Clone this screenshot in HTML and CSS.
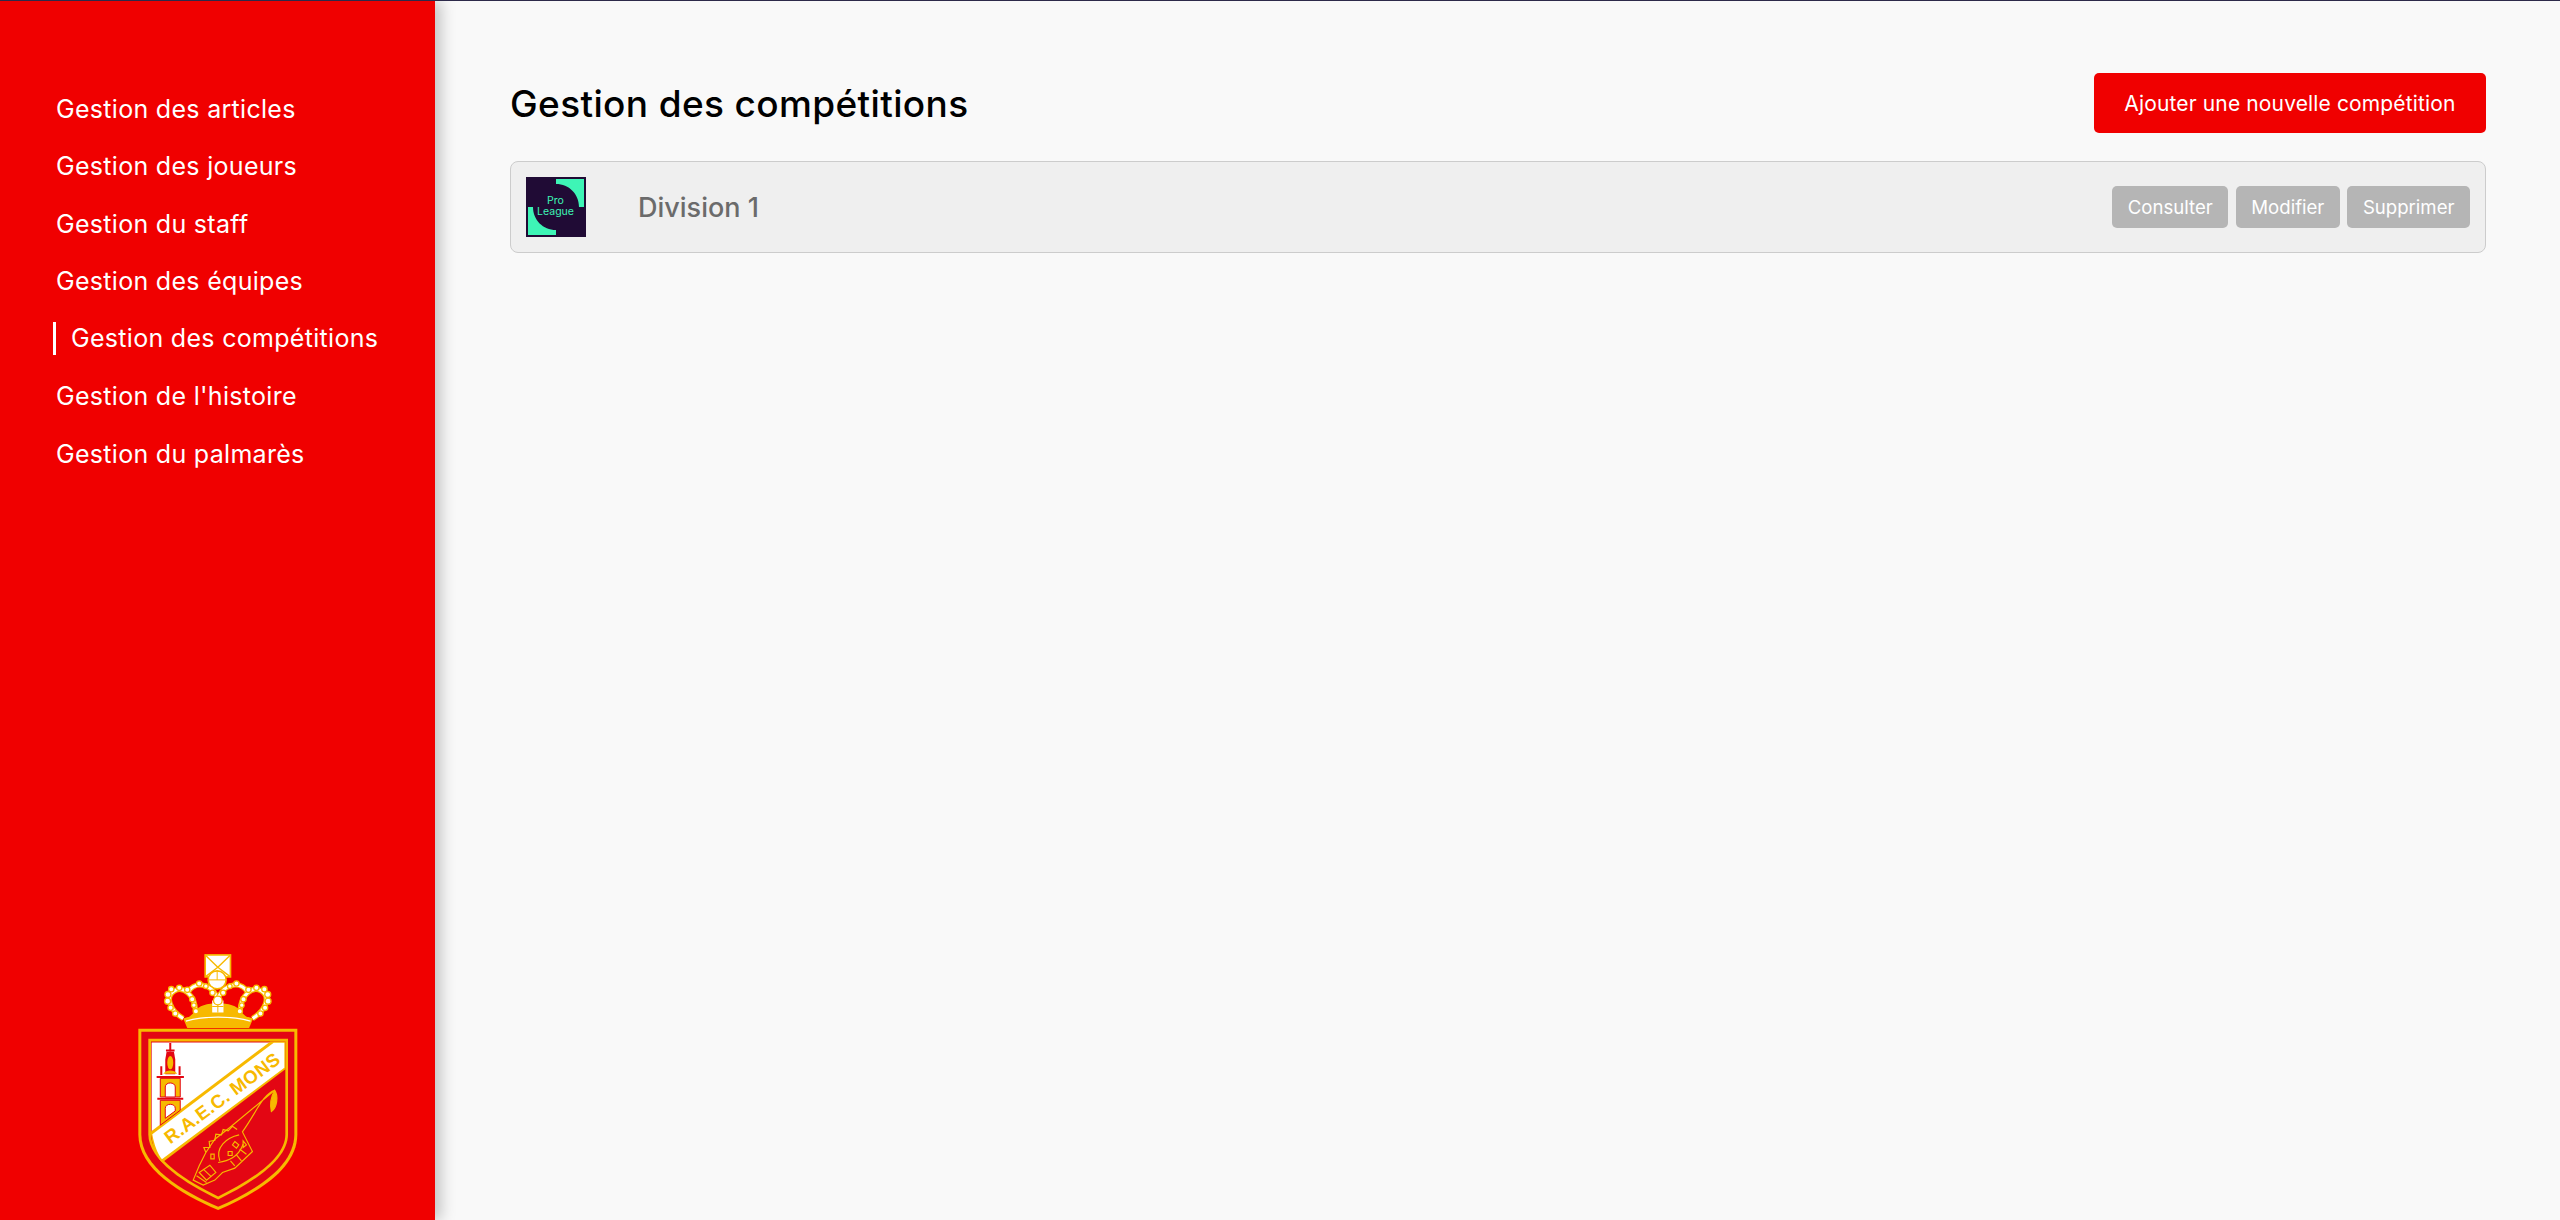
FILE: index.html
```html
<!DOCTYPE html>
<html lang="fr">
<head>
    <meta charset="UTF-8">
    <meta name="viewport" content="width=device-width, initial-scale=1.0">
    <title>Gestion des compétitions</title>
    <link rel="stylesheet" href="styles.css">
</head>
<body>
    <!-- Sidebar -->
    <aside class="sidebar">
        <ul class="nav">
            <li><a href="#">Gestion des articles</a></li>
            <li><a href="#">Gestion des joueurs</a></li>
            <li><a href="#">Gestion du staff</a></li>
            <li><a href="#">Gestion des équipes</a></li>
            <li><a href="#" class="active">Gestion des compétitions</a></li>
            <li><a href="#">Gestion de l'histoire</a></li>
            <li><a href="#">Gestion du palmarès</a></li>
        </ul>

        <!-- Club crest -->
        <svg class="crest" viewBox="114 66 484 774" role="img" aria-label="R.A.E.C. Mons">
            <!-- cross and orb -->
            <rect x="316" y="71" width="76" height="66" fill="#fff" stroke="#f7b900" stroke-width="5"/>
            <path d="M316 71 L354 108 L392 71 M354 108 L316 137 M354 108 L392 137" fill="none" stroke="#f7b900" stroke-width="4"/>
            <circle cx="352" cy="146" r="27" fill="#fff" stroke="#f7b900" stroke-width="5"/>
            <path d="M325 146 H379 M352 119 V146" stroke="#f7b900" stroke-width="3"/>
            <!-- crown: one half, mirrored -->
            <path d="M287 240 C300 208 408 208 421 240 L450 266 H258 Z" fill="#f7b900"/>
            <rect x="337" y="208" width="34" height="36" fill="#fff"/>
            <path d="M337 226 H371 M354 208 V244" stroke="#f7b900" stroke-width="3"/>
            <g id="crown-half" fill="none">
                <path d="M250 262 C212 240 192 195 225 178 C250 165 285 190 287 240" stroke="#f7b900" stroke-width="16"/>
                <path d="M250 262 C212 240 192 195 225 178 C250 165 285 190 287 240" stroke="#fff" stroke-width="9"/>
                <path d="M265 182 C285 150 330 155 352 197" stroke="#f7b900" stroke-width="16"/>
                <path d="M265 182 C285 150 330 155 352 197" stroke="#fff" stroke-width="9"/>
                <g fill="#fff" stroke="#f7b900" stroke-width="4">
                    <circle cx="204" cy="190" r="9"/><circle cx="203" cy="210" r="9"/><circle cx="212" cy="230" r="8"/><circle cx="226" cy="247" r="8"/>
                    <circle cx="214" cy="174" r="8"/><circle cx="238" cy="170" r="8"/><circle cx="277" cy="204" r="8"/><circle cx="282" cy="222" r="7"/>
                    <circle cx="288" cy="240" r="8"/><circle cx="262" cy="176" r="8"/><circle cx="298" cy="157" r="8"/><circle cx="318" cy="165" r="7"/>
                    <circle cx="338" cy="185" r="8"/>
                </g>
            </g>
            <use href="#crown-half" transform="translate(708 0) scale(-1 1)"/>
            <circle cx="354" cy="208" r="13" fill="#fff" stroke="#f7b900" stroke-width="4"/>
            <path d="M250 262 C300 245 410 245 460 262 L448 291 H262 Z" fill="#f7b900"/>
            <path d="M258 270 C310 254 400 254 452 270" fill="none" stroke="#fff" stroke-width="4"/>
            <!-- shield -->
            <path d="M115 293 H593 V610 C593 715 470 788 355 838 C240 788 115 715 115 610 Z" fill="#f7b900"/>
            <path d="M124 302 H584 V610 C584 708 465 780 355 828 C245 780 124 708 124 610 Z" fill="#e30613"/>
            <path d="M145 323 H565 V610 C565 690 450 760 355 806 C260 760 145 690 145 610 Z" fill="#f7b900"/>
            <path d="M153 331 H557 V610 C557 685 447 752 355 797 C263 752 153 685 153 610 Z" fill="#e30613"/>
            <path d="M155 334 H520 L155 604 Z" fill="#fff"/>
            <!-- diagonal band -->
            <path d="M153 602 L512 331 H557 V415 L187 695 C170 680 158 650 153 610 Z" fill="#f7b900"/>
            <path d="M157 610 L522 335 H554 V410 L186 685 C172 668 162 640 157 610 Z" fill="#fff"/>
            <text class="crest-text" x="0" y="0" transform="translate(211 641) rotate(-36.5)">R.A.E.C. MONS</text>
            <!-- belfry -->
            <path d="M181 442 H241 V498 H181 Z M181 508 H241 V538 L181 583 Z" fill="#f7b900" stroke="#e30613" stroke-width="3"/>
            <path d="M196 430 V385 L200 362 H222 L226 385 V430 Z" fill="#e30613"/>
            <ellipse cx="211" cy="395" rx="9" ry="20" fill="#f7b900"/>
            <path d="M190 428 C200 415 222 415 232 428 Z" fill="#f7b900"/>
            <path d="M211 336 V362 M198 358 H224 M170 438 H252 M172 503 H250 M184 406 V432 M239 406 V432" stroke="#e30613" stroke-width="6"/>
            <path d="M196 498 V468 C196 452 226 452 226 468 V498 Z M196 562 V532 C196 516 226 516 226 532 V540 Z" fill="#fff" stroke="#e30613" stroke-width="3"/>
            <!-- dragon -->
            <g fill="none" stroke="#f7b900" stroke-width="3.5">
                <path d="M525 478 C500 485 480 520 465 545 C450 570 437 590 428 603 L458 662 L405 712 L368 725 L345 748 L310 763 L280 748 L298 705 L318 665 L345 625 L390 590 Z" fill="#e30613"/>
                <path d="M525 478 C537 495 532 530 515 542 C510 520 515 495 525 478 Z" fill="#f7b900"/>
                <path d="M318 665 L312 650 L330 650 L328 632 L345 628 L348 610 L365 612 L370 596 L385 600 L398 586 L412 596"/>
                <path d="M360 690 C345 650 380 620 418 612 M355 695 C385 690 415 680 430 640"/>
                <path d="M333 670 H343 V684 H333 Z M405 632 L417 642 L410 652 L398 642 Z M385 662 H397 V674 H385 Z M430 630 L440 642 L430 650 Z"/>
                <path d="M298 725 L330 703 L348 725 L320 748 Z M290 735 L320 755 M310 715 L335 738"/>
                <path d="M440 670 L420 655 M425 690 L410 672 M405 705 L392 690"/>
            </g>
        </svg>
    </aside>

    <main class="content">
        <div class="content-header">
            <h1>Gestion des compétitions</h1>
            <button class="btn-add">Ajouter une nouvelle compétition</button>
        </div>

        <div class="competition">
            <!-- Pro League logo -->
            <svg class="competition-logo" viewBox="0 0 60 60" role="img" aria-label="Pro League">
                <rect width="60" height="60" fill="#200b35"/>
                <path d="M30 2 H58 V30 H53 C53 17 43 7 30 7 Z M2 30 H7 C7 43 17 53 30 53 V58 H2 Z" fill="#3ef5b6"/>
                <text class="logo-text" x="29.5" y="27">Pro</text>
                <text class="logo-text" x="29.5" y="37.5">League</text>
            </svg>
            <span class="competition-name">Division 1</span>
            <div class="actions">
                <button>Consulter</button>
                <button>Modifier</button>
                <button>Supprimer</button>
            </div>
        </div>
    </main>
</body>
</html>
```

FILE: styles.css
```css
* {
    box-sizing: border-box;
}

body {
    margin: 0;
    height: 100vh;
    display: flex;
    background: #f9f9f9;
    border-top: 1px solid #2d2a4a;
    font-family: Inter, 'Noto Sans', sans-serif;
    overflow: hidden;
}

/* Sidebar */
.sidebar {
    width: 435px;
    flex-shrink: 0;
    display: flex;
    flex-direction: column;
    justify-content: space-between;
    align-items: center;
    padding: 79px 0 9px;
    background: #f00000;
    box-shadow: 6px 0 14px rgba(0, 0, 0, 0.22);
}

.nav {
    list-style: none;
    margin: 0;
    padding: 0 0 0 56px;
    width: 100%;
}

.nav li {
    height: 57.5px;
    display: flex;
    align-items: center;
}

.nav a {
    color: #fff;
    font-size: 25px;
    letter-spacing: 0.3px;
    text-decoration: none;
}

.nav a.active {
    margin-left: -3px;
    padding-left: 15px;
    line-height: 33px;
    border-left: 3px solid #fff;
}

.crest {
    display: block;
    width: 161px;
    height: 258px;
    margin-left: 2px;
}

.crest-text {
    fill: #f7b900;
    font-family: 'Liberation Sans', sans-serif;
    font-size: 56px;
    font-weight: 700;
    letter-spacing: 1px;
}

/* Main content */
.content {
    flex: 1;
    padding: 72px 74px 0 75px;
}

.content-header {
    display: flex;
    justify-content: space-between;
    align-items: center;
}

h1 {
    margin: 0;
    color: #000;
    font-size: 37px;
    font-weight: 500;
    letter-spacing: 0.37px;
}

.btn-add {
    height: 60px;
    padding: 0 30.5px;
    background: #f00000;
    color: #fff;
    border: none;
    border-radius: 5px;
    font-family: inherit;
    font-size: 21px;
    letter-spacing: 0.14px;
    cursor: pointer;
}

.competition {
    display: flex;
    align-items: center;
    height: 92px;
    margin-top: 28px;
    padding: 0 15px;
    background: #efefef;
    border: 1px solid #ccc;
    border-radius: 8px;
}

.competition-logo {
    width: 60px;
    height: 60px;
}

.logo-text {
    fill: #3ef5b6;
    font-family: Inter, sans-serif;
    font-size: 10.5px;
    text-anchor: middle;
}

.competition-name {
    margin-left: 52px;
    color: #6b6b6b;
    font-size: 27px;
    font-weight: 500;
}

.actions {
    display: flex;
    gap: 7.5px;
    margin-left: auto;
}

.actions button {
    height: 42px;
    padding: 0 15.5px;
    background: #b5b5b5;
    color: #fff;
    border: none;
    border-radius: 5px;
    font-family: inherit;
    font-size: 18.6px;
    cursor: pointer;
}
```
